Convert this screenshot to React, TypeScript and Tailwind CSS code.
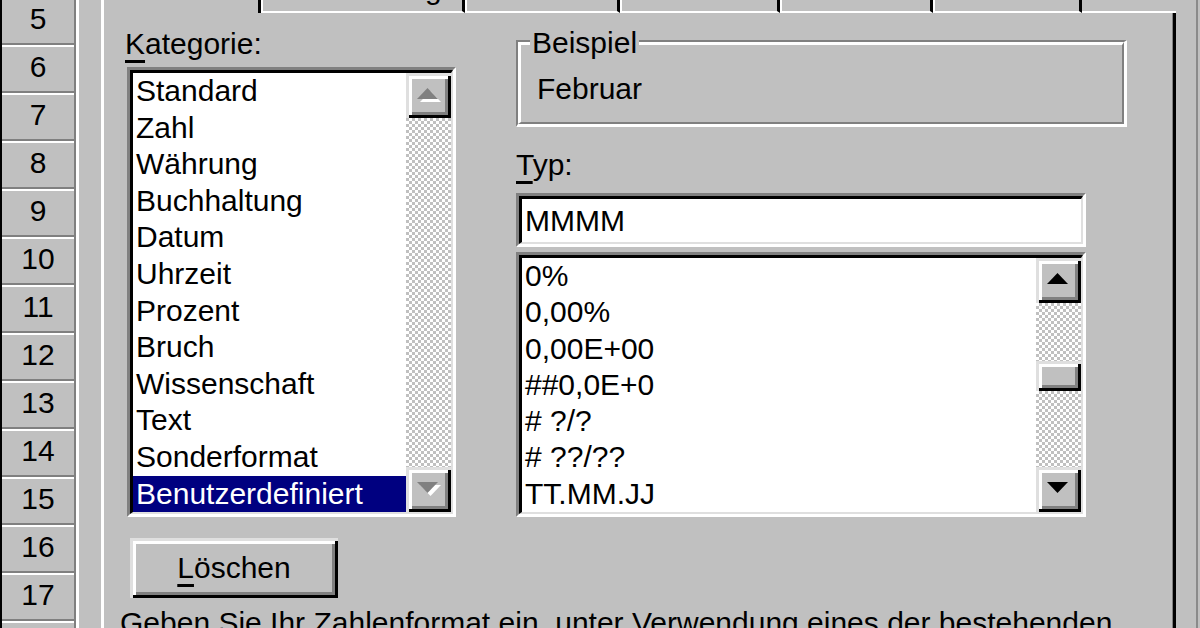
import React from "react";

const cats = [
  "Standard",
  "Zahl",
  "Währung",
  "Buchhaltung",
  "Datum",
  "Uhrzeit",
  "Prozent",
  "Bruch",
  "Wissenschaft",
  "Text",
  "Sonderformat",
  "Benutzerdefiniert",
];
const fmts = ["0%", "0,00%", "0,00E+00", "##0,0E+0", "# ?/?", "# ??/??", "TT.MM.JJ"];
const rows = [5, 6, 7, 8, 9, 10, 11, 12, 13, 14, 15, 16, 17, 18];

const BTN =
  "bg-[#c0c0c0] shadow-[inset_3px_3px_0_#dfdfdf,inset_-3px_-3px_0_#000000,inset_6px_6px_0_#ffffff,inset_-6px_-6px_0_#808080]";
const CHECK =
  "bg-[image:repeating-conic-gradient(#c0c0c0_0%_25%,#ffffff_0%_50%)] bg-[length:6px_6px]";

function Arrow({ dir, disabled }: { dir: "up" | "down"; disabled?: boolean }) {
  const pts = dir === "up" ? "0,11 21,11 10.5,0" : "0,0 21,0 10.5,11";
  return (
    <svg width="24" height="14" viewBox="0 0 24 14" className="block">
      {disabled && <polygon points={pts} fill="#ffffff" transform="translate(3,3)" />}
      <polygon points={pts} fill={disabled ? "#808080" : "#000000"} />
    </svg>
  );
}

function ScrollBtn({ dir, disabled }: { dir: "up" | "down"; disabled?: boolean }) {
  return (
    <div className={`h-[45px] w-full flex items-center justify-center pb-[2px] ${BTN}`}>
      <Arrow dir={dir} disabled={disabled} />
    </div>
  );
}

function Sunken({ className, children }: { className?: string; children: React.ReactNode }) {
  return (
    <div
      className={`border-t-[3px] border-l-[3px] border-t-[#808080] border-l-[#808080] border-b-[3px] border-r-[3px] border-b-white border-r-white ${className ?? ""}`}
    >
      <div className="h-full w-full border-t-[3px] border-l-[3px] border-t-black border-l-black border-b-[2px] border-r-[2px] border-b-[#dfdfdf] border-r-[#dfdfdf] bg-white flex">
        {children}
      </div>
    </div>
  );
}

function Tab({ w, label, selected }: { w: string; label?: string; selected?: boolean }) {
  return (
    <div
      className={`${w} h-[13px] overflow-hidden shrink-0 text-center ${
        selected
          ? "border-l-[3px] border-l-white border-r-[3px] border-r-black"
          : "border-l-[2px] border-l-white border-r-[3px] border-r-black border-b-[2px] border-b-white"
      }`}
    >
      {label && <span className="block -mt-[29px] leading-[36px] whitespace-nowrap">{label}</span>}
    </div>
  );
}

export default function App() {
  return (
    <div className="w-[1200px] h-[628px] overflow-hidden bg-[#c0c0c0] flex text-[30px] text-black font-['Liberation_Sans',Arial,sans-serif]">
      <div className="w-[2px] shrink-0 bg-black" />
      <div className="w-[72px] shrink-0 flex flex-col -mt-[3px]">
        {rows.map((r) => (
          <div
            key={r}
            className="h-[48px] shrink-0 border-t-[2px] border-t-white border-b-[2px] border-b-[#808080] flex items-center justify-center pb-[5px] leading-[36px]"
          >
            {r}
          </div>
        ))}
      </div>
      <div className="w-[2px] shrink-0 bg-[#808080]" />
      <div className="w-[3px] shrink-0 bg-white" />
      <div className="w-[22px] shrink-0" />
      <div className="w-[1075px] shrink-0 flex flex-col">
        <div className="h-[13px] flex shrink-0">
          <Tab w="w-[160px]" selected />
          <Tab w="w-[204px]" label="Ausrichtung" />
          <Tab w="w-[155px]" />
          <Tab w="w-[160px]" />
          <Tab w="w-[153px]" />
          <Tab w="w-[149px]" />
          <div className="flex-1 h-[13px] border-b-[2px] border-b-white" />
        </div>
        <div className="flex-1 border-l-[3px] border-l-white border-r-[3px] border-r-black shadow-[inset_-1px_0_0_#808080] pt-[13px] pl-[16px]">
          <div className="flex pl-[7px]">
            {/* left column */}
            <div className="w-[329px] shrink-0 flex flex-col">
              <div className="h-[36px] leading-[36px] -ml-[2px] whitespace-nowrap">
                <span className="underline decoration-[3px] underline-offset-[6px]">K</span>ategorie:
              </div>
              <Sunken className="mt-[5px] h-[450px]">
                <div className="flex-1 flex flex-col">
                  {cats.map((c, i) => (
                    <div
                      key={c}
                      className={`h-[36.6px] shrink-0 leading-[36.6px] pl-[3px] whitespace-nowrap ${
                        i === cats.length - 1 ? "bg-[#000080] text-white" : ""
                      }`}
                    >
                      {c}
                    </div>
                  ))}
                </div>
                <div className={`w-[45px] shrink-0 flex flex-col ${CHECK}`}>
                  <ScrollBtn dir="up" disabled />
                  <div className="flex-1" />
                  <ScrollBtn dir="down" disabled />
                </div>
              </Sunken>
              <div className={`mt-[21px] ml-[3px] w-[208px] h-[60px] flex items-center justify-center leading-[36px] ${BTN}`}>
                <span>
                  <span className="underline decoration-[3px] underline-offset-[6px]">L</span>öschen
                </span>
              </div>
            </div>
            {/* right column */}
            <div className="ml-[60px] w-[611px] shrink-0 flex flex-col">
              <div className="relative mt-[14px] h-[87px] border-t-[2px] border-l-[2px] border-t-[#808080] border-l-[#808080] border-b-[3px] border-r-[3px] border-b-white border-r-white">
                <div className="h-full border-t-[3px] border-l-[3px] border-t-white border-l-white border-b-[2px] border-r-[2px] border-b-[#808080] border-r-[#808080] pt-[26px] pl-[16px] leading-[36px]">
                  Februar
                </div>
                <div className="absolute left-[12px] -top-[17px] px-[2px] bg-[#c0c0c0] leading-[36px]">Beispiel</div>
              </div>
              <div className="mt-[20px] h-[36px] leading-[36px] whitespace-nowrap">
                <span className="underline decoration-[3px] underline-offset-[6px]">T</span>yp:
              </div>
              <Sunken className="mt-[10px] h-[54px] w-[570px]">
                <div className="flex-1 flex items-center pl-[3px] leading-[36px]">MMMM</div>
              </Sunken>
              <Sunken className="mt-[5px] h-[265px] w-[570px]">
                <div className="flex-1 flex flex-col overflow-hidden">
                  {fmts.map((f) => (
                    <div key={f} className="h-[36.3px] shrink-0 leading-[36.3px] pl-[3px] whitespace-pre">
                      {f}
                    </div>
                  ))}
                </div>
                <div className="w-[45px] shrink-0 flex flex-col">
                  <ScrollBtn dir="up" />
                  <div className={`h-[58px] shrink-0 ${CHECK}`} />
                  <div className={`h-[30px] shrink-0 ${BTN}`} />
                  <div className={`flex-1 ${CHECK}`} />
                  <ScrollBtn dir="down" />
                </div>
              </Sunken>
            </div>
          </div>
          <div className="mt-[7px] leading-[36px] whitespace-nowrap">
            Geben Sie Ihr Zahlenformat ein, unter Verwendung eines der bestehenden
          </div>
        </div>
      </div>
      <div className="w-[20px] shrink-0" />
      <div className="w-[2px] shrink-0 bg-[#8a8a8a]" />
      <div className="flex-1" />
    </div>
  );
}
